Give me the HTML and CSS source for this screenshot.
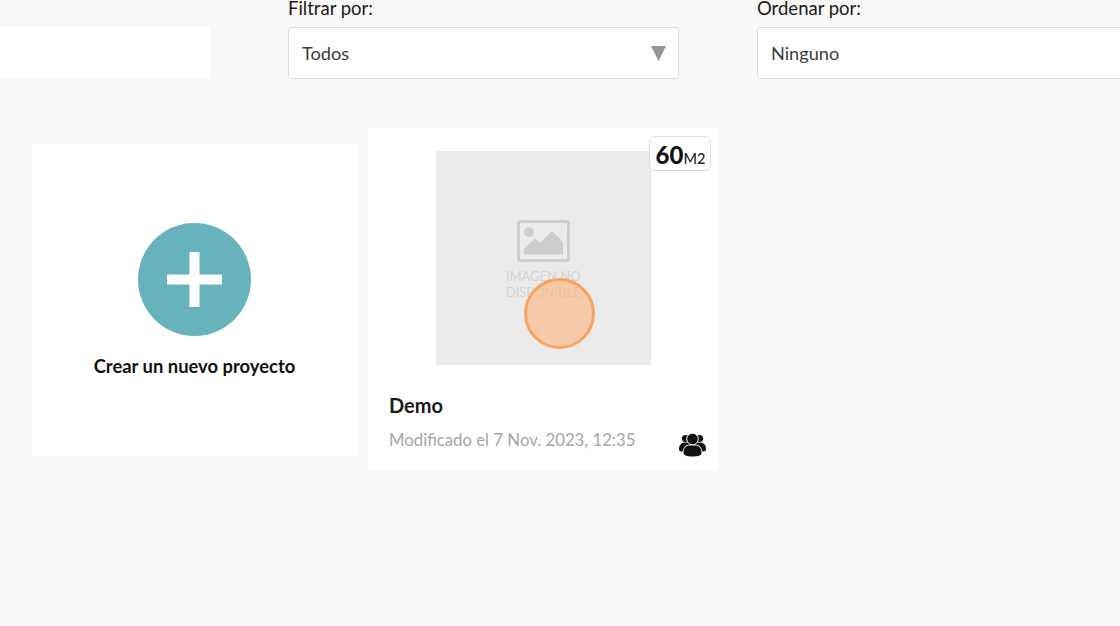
FILE: index.html
```html
<!DOCTYPE html>
<html lang="es">
<head>
  <meta charset="UTF-8" />
  <title>Proyectos</title>
  <meta name="viewport" content="width=device-width, initial-scale=1" />
  <link rel="stylesheet" href="styles.css">
</head>
<body>

  <div class="toolbar">
    <div class="field">
      <div class="box"></div>
    </div>
    <div class="field">
      <label>Filtrar por:</label>
      <div class="box select">
        <span>Todos</span>
        <svg class="arrow" width="15" height="15" viewBox="0 0 15 15"><path d="M0 0H15L7.5 15Z" fill="#959595"/></svg>
      </div>
    </div>
    <div class="field">
      <label>Ordenar por:</label>
      <div class="box select">
        <span>Ninguno</span>
      </div>
    </div>
  </div>

  <div class="cards">
    <div class="card-new">
      <div class="plus-circle">
        <svg width="55" height="55" viewBox="0 0 55 55"><path d="M22.500 0H32.500V22.500H55V32.500H32.500V55H22.500V32.500H0V22.500H22.500Z" fill="#fff"/></svg>
      </div>
      <div class="new-label">Crear un nuevo proyecto</div>
    </div>

    <div class="card-project">
      <div class="area"><b>60</b>M2</div>
      <div class="thumb">
        <svg class="thumb-icon" width="53" height="42" viewBox="0 0 53 42">
          <rect x="1.500" y="1.500" width="50" height="39" rx="2" fill="none" stroke="#cdcdcd" stroke-width="3"/>
          <circle cx="12" cy="12" r="5" fill="#cdcdcd"/>
          <path d="M7 34.500V29L18 18.500L23 23L35 11L46 22V34.500Z" fill="#cdcdcd"/>
        </svg>
        <div class="thumb-text">IMAGEN NO<br>DISPONIBLE</div>
      </div>
      <div class="project-name">Demo</div>
      <div class="project-foot">
        <span class="project-date">Modificado el 7 Nov. 2023, 12:35</span>
        <svg class="users" width="27" height="24" viewBox="0 0 27 24">
          <circle cx="6.500" cy="5.500" r="3.600" fill="#111"/>
          <circle cx="20.500" cy="5.500" r="3.600" fill="#111"/>
          <path d="M0 16.500C0 11.500 2.500 9.500 6 9.500H21C24.500 9.500 27 11.500 27 16.500C27 18 25.500 18.500 23.500 18.500H3.500C1.500 18.500 0 18 0 16.500Z" fill="#111"/>
          <circle cx="13.500" cy="6" r="5.800" fill="#111" stroke="#fff" stroke-width="1"/>
          <path d="M4 20C4 15 7 12 10.500 12H16.500C20 12 23 15 23 20C23 22.500 19.500 24 13.500 24C7.500 24 4 22.500 4 20Z" fill="#111" stroke="#fff" stroke-width="1"/>
        </svg>
      </div>
      <div class="click-mark"></div>
    </div>
  </div>

</body>
</html>
```

FILE: styles.css
```css
html, body {
  height: 100%;
}
body {
  font-family: 'Lato', 'Open Sans', sans-serif;
  background: #f9f8f6;
  color: #1a1a1a;
  margin: 0;
  overflow: hidden;
}
.toolbar {
  display: flex;
  gap: 78px;
  margin-left: -181px;
  width: 1329px;
  height: 79px;
  align-items: flex-end;
}
.field {
  width: 391px;
  flex: none;
}
.field label {
  display: block;
  font-size: 18.5px;
  line-height: 16px;
  margin-bottom: 11px;
}
.box {
  height: 52px;
  box-sizing: border-box;
  background: white;
  border-radius: 4px;
}
.select {
  border: 1px solid #dcdcdc;
  padding: 0 13px;
  display: flex;
  align-items: center;
  justify-content: space-between;
  font-size: 18.2px;
  color: #3c3c3c;
}
.arrow {
  margin-right: -1px;
}
.cards {
  display: flex;
  align-items: flex-start;
  gap: 10px;
  padding-left: 32px;
  margin-top: 49px;
}
.card-new {
  width: 326px;
  height: 312px;
  box-sizing: border-box;
  padding-right: 1px;
  margin-top: 16px;
  background: white;
  display: flex;
  flex-direction: column;
  align-items: center;
}
.plus-circle {
  width: 113px;
  height: 113px;
  margin-top: 79px;
  border-radius: 50%;
  background: #67b3bd;
  display: flex;
  align-items: center;
  justify-content: center;
}
.new-label {
  margin-top: 19px;
  font-size: 18.4px;
  font-weight: 700;
  color: #111;
}
.card-project {
  position: relative;
  width: 350px;
  height: 343px;
  box-sizing: border-box;
  padding: 23px 12px 0 21px;
  background: white;
}
.area {
  position: absolute;
  top: 8px;
  left: 281px;
  width: 62px;
  height: 35px;
  box-sizing: border-box;
  padding-left: 1px;
  display: flex;
  align-items: baseline;
  justify-content: center;
  line-height: 35px;
  background: white;
  border: 1.5px solid #dcdcdc;
  border-radius: 6px;
  font-size: 14.5px;
  font-weight: 500;
  color: #222;
}
.area b {
  font-size: 24px;
  font-weight: 900;
  color: #111;
}
.thumb {
  width: 214.5px;
  height: 214px;
  margin-left: 47px;
  background: #ebebeb;
  display: flex;
  flex-direction: column;
  align-items: center;
}
.thumb-icon {
  margin-top: 69px;
}
.thumb-text {
  margin-top: 6px;
  width: 90px;
  font-size: 13px;
  line-height: 16px;
  text-align: center;
  color: #d2d2d2;
}
.project-name {
  margin-top: 28px;
  font-size: 20px;
  font-weight: 700;
  line-height: 24px;
  color: #1a1a1a;
}
.project-foot {
  display: flex;
  justify-content: space-between;
  align-items: flex-start;
  margin-top: 12px;
}
.project-date {
  font-size: 16.75px;
  line-height: 22px;
  color: #a6a6a6;
}
.users {
  margin-top: 4px;
}
.click-mark {
  position: absolute;
  left: 156px;
  top: 149.5px;
  width: 71px;
  height: 71px;
  box-sizing: border-box;
  border-radius: 50%;
  background: rgb(255 180 125 / 0.6);
  border: 3px solid #fba35c;
}
```
